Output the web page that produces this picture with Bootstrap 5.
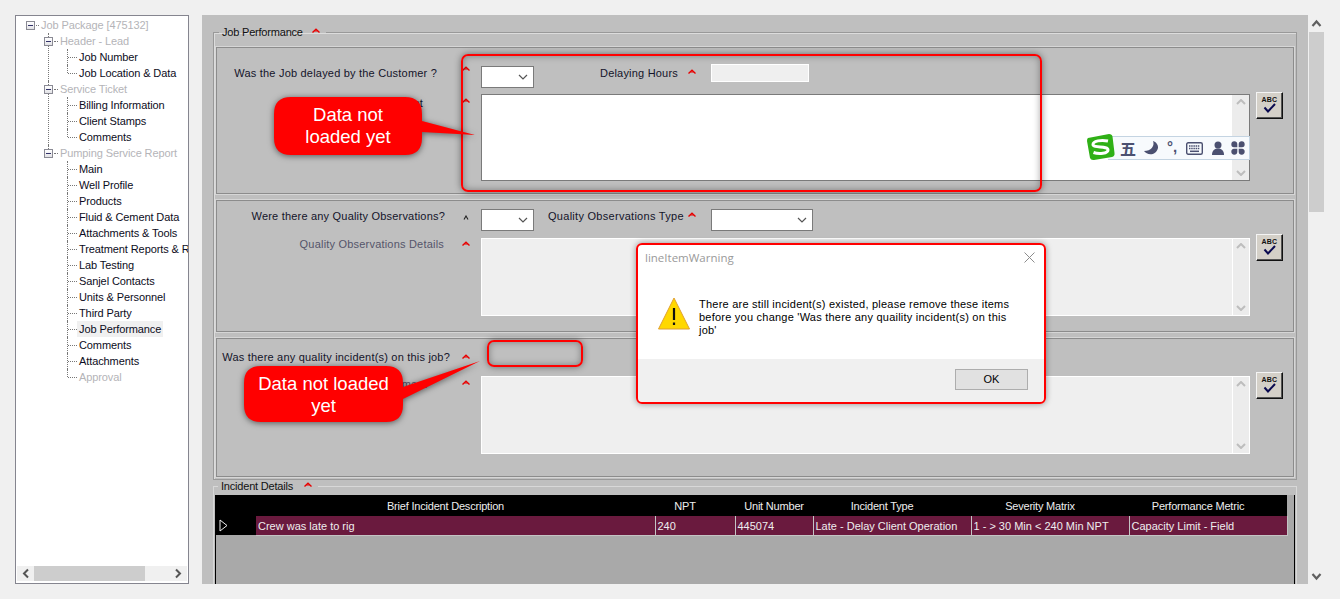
<!DOCTYPE html>
<html lang="en">
<head>
    <meta charset="UTF-8">
    <meta name="viewport" content="width=device-width, initial-scale=1.0">
    <title>Job Performance</title>
    <link href="https://cdn.jsdelivr.net/npm/bootstrap@5.3.0/dist/css/bootstrap.min.css" rel="stylesheet">
    <style>
        html, body { height: 100%; overflow: hidden; }
        body {
            background: #f0f0f0;
            color: #14142a;
            font-family: "Liberation Sans", Arial, sans-serif;
            font-size: 11px;
            line-height: 14px;
        }
        .stage { position: relative; width: 1340px; height: 599px; overflow: hidden; padding: 15px 0 0 15px; }
        .shell { height: 569px; }

        /* tree */
        .tree-box { width: 174px; height: 569px; background: #fff; border: 1px solid #85858f; position: relative; overflow: hidden; }
        .tree-box ul { list-style: none; margin: 0; padding: 0; }
        .tree-box .tree-root { padding: 1px 0 0 10px; }
        .tree-row { display: flex; align-items: center; height: 16px; white-space: nowrap; color: #0c0c22; letter-spacing: -.1px; }
        .tree-row.tree-off { color: #b4b4b8; }
        .exp-box { width: 9px; height: 9px; border: 1px solid #8a8a94; background: linear-gradient(#fff, #e2e2e6); position: relative; flex: none; z-index: 1; }
        .exp-box::after { content: ""; position: absolute; left: 1px; right: 1px; top: 3px; height: 1px; background: #33336a; }
        .dots { border-top: 1px dotted #777; flex: none; }
        .dots-root { width: 3px; margin: 0 2px 0 1px; }
        .dots-a { width: 4px; margin: 0 2px 0 1px; }
        .dots-b { width: 9px; margin: 0 2px 0 1px; }
        .tree-box .tree-l1 { margin-left: 22px; }
        .tree-l1 > li { position: relative; }
        .tree-l1 > li > .tree-row { margin-left: -4px; }
        .tree-box .tree-l2 { margin-left: 19px; }
        .tree-l1 > li::before, .tree-l2 > li::before { content: ""; position: absolute; left: 0; top: 0; bottom: 0; border-left: 1px dotted #777; }
        .tree-l1 > li:last-child::before, .tree-l2 > li:last-child::before { bottom: auto; height: 8px; }
        .tree-l2 > li { position: relative; }
        .tree-sel span:last-child { background: #f0f0f0; padding: 1px 2px; margin-left: -2px; }
        .h-scroll { position: absolute; left: 1px; right: 1px; bottom: 2px; height: 15px; background: #f0f0f0; }
        .h-thumb { width: 111px; height: 15px; background: #cdcdcd; }

        /* main panel */
        .main-pane { width: 1106px; height: 569px; margin-left: 13px; background: #bfbfbf; padding: 10px 11px 0; overflow: hidden; flex: none; }
        .v-scroll { width: 15px; height: 569px; margin-left: 1px; flex: none; }
        .v-thumb { height: 180px; background: #cdcdcd; }
        .v-arrow { height: 15px; }
        .v-arrow-top { height: 17px; }
        .v-arrow svg { width: 11px; height: 9px; }
        .legacy-set { border: 1px solid #999; box-shadow: inset 1px 1px 0 #dcdcdc; padding: 0 2px 2px; margin: 0; min-width: 0; }
        .legacy-set legend { float: none; width: auto; margin: 0 0 0 3px; padding: 0 3px; font-size: 11px; line-height: 14px; letter-spacing: -.2px; color: #111; }
        .legacy-set legend svg { margin-left: 9px; margin-right: 3px; vertical-align: 3px; }
        .set-two { border-color: #d8d8d8; box-shadow: none; padding: 0 1px; height: 120px; margin-top: -1px; }
        .set-two legend { margin-left: 3px; }
        .set-two legend svg { margin-left: 11px; }
        .sub-panel { border: 1px solid #8c8c8c; box-shadow: 0 0 0 1px #d6d6d6; position: relative; }
        .panel-a { height: 147px; margin-top: 8px; padding-top: 18px; }
        .panel-b { height: 132px; margin-top: 6px; padding-top: 8px; }
        .panel-c { height: 139px; margin-top: 6px; padding-top: 11px; }
        .form-line { display: flex; align-items: flex-start; }
        .gap-a { margin-top: 6px; }
        .gap-b { margin-top: 7px; }
        .gap-c { margin-top: 12px; }
        .fld-label { width: 244px; flex: none; text-align: right; white-space: nowrap; letter-spacing: .2px; }
        .inline-label { white-space: nowrap; letter-spacing: .2px; }
        .label-wide { letter-spacing: .28px; }
        .pr-24 { padding-right: 24px; }
        .pr-38 { padding-right: 38px; }
        .pr-16 { padding-right: 16px; }
        .pr-17 { padding-right: 17px; }
        .pr-11 { padding-right: 11px; }
        .pr-34 { padding-right: 34px; }
        .down-9 { padding-top: 2px; }
        .down-1 { padding-top: 1px; }
        .lift-1 { margin-top: -1px; }
        .faded { color: #55556a; }
        .req { width: 8px; height: 5px; flex: none; display: block; }
        .req-slot { width: 20px; flex: none; padding-left: 1px; padding-top: 4px; }
        .slot-top { padding-top: 0; }
        .slot-black { padding-top: 6px; }
        .slot-mid { padding-top: 3px; }
        .req-inline { margin: 3px 15px 0 10px; }
        .req-near { margin-left: 4px; }
        .fake-select { width: 53px; height: 22px; background: #fff; border: 1px solid #7a7a7a; flex: none; padding-right: 5px; }
        .select-wide { width: 102px; }
        .fake-select svg { width: 10px; height: 6px; }
        .ml-66 { margin-left: 66px; }
        .ml-14 { margin-left: 14px; }
        .hrs-box { width: 98px; height: 18px; background: #efefef; border: 1px solid #fff; margin-top: -2px; flex: none; }
        .memo-box { width: 769px; height: 87px; background: #fff; border: 1px solid #7a7a7a; flex: none; margin-right: 6px; }
        .memo-off { height: 78px; background: #efefef; border-color: #fff; }
        .memo-track { width: 17px; background: #ececec; height: 100%; padding: 4px 0; }
        .memo-track svg { width: 10px; height: 6px; }
        .memo-off .memo-track { border-left: 1px solid #fff; }
        .abc-btn { width: 27px; height: 27px; margin-top: -2px; background: #d4d0c8; border: 1px solid; border-color: #f4f4f4 #111 #111 #f4f4f4; box-shadow: inset -1px -1px 0 #555; flex: none; position: relative; font-size: 7px; font-weight: 700; line-height: 8px; text-align: center; padding-top: 3px; color: #111; letter-spacing: .2px; }
        .abc-up { margin-top: -4px; }
        .abc-btn svg { position: absolute; left: 6px; top: 10px; width: 13px; height: 10px; }

        /* incident grid */
        .grid-wrap { background: #a9a9a9; border-left: 1px solid #000; border-right: 1px solid #000; height: 100px; margin-top: 2px; padding-right: 7px; }
        .incident-grid { width: 1071px; table-layout: fixed; margin: 0; border-collapse: collapse; color: #eee; font-size: 11px; line-height: 14px; }
        .incident-grid th { background: #000; color: #eee; font-weight: 400; text-align: center; vertical-align: middle; height: 21px; padding: 0 20px 0 0; border: 0; white-space: nowrap; letter-spacing: -.2px; }
        .incident-grid td { background: #6a1a3e; color: #eee; vertical-align: middle; height: 19px; padding: 1px 2px 0; border: 0; border-right: 1px solid #c4c4c4; border-bottom: 1px solid #c4c4c4; white-space: nowrap; overflow: hidden; }
        .incident-grid th.no-pad { padding-right: 0; }
        .incident-grid td.row-head { background: #000; border: 0; padding: 0 0 0 3px; }
        .col-h { width: 40px; }
        .col-brief { width: 399px; }
        .col-npt { width: 80px; }
        .col-unit { width: 78px; }
        .col-wide { width: 158px; }

        /* overlays */
        .mark-box { position: absolute; border: 2px solid #f00; border-radius: 7px; box-shadow: 0 0 7px rgba(0,0,0,.45), inset 0 0 7px rgba(0,0,0,.35); pointer-events: none; }
        .mark-a { left: 461px; top: 54px; width: 581px; height: 138px; z-index: 3; }
        .mark-b { left: 636px; top: 243px; width: 410px; height: 161px; border-radius: 6px; z-index: 6; box-shadow: 0 0 6px rgba(0,0,0,.4); }
        .mark-c { left: 487px; top: 340px; width: 96px; height: 27px; z-index: 3; }
        .callout { position: absolute; z-index: 4; color: #fff; font-size: 18.5px; line-height: 21.5px; text-align: center; }
        .callout svg { position: absolute; left: 0; top: 0; overflow: visible; filter: drop-shadow(0 1px 3px rgba(0,0,0,.55)); }
        .callout span { position: relative; display: block; }
        .call-a { left: 274px; top: 97px; width: 148px; height: 58px; padding-top: 7px; }
        .call-b { left: 244px; top: 366px; width: 159px; height: 56px; padding-top: 7px; }

        .warn-dlg { position: absolute; left: 638px; top: 245px; width: 406px; height: 157px; z-index: 5; border: 0; border-radius: 0; background: #fff; }
        .dlg-title { height: 24px; padding: 6px 8px 0 7px; font-family: "Open Sans", sans-serif; font-size: 11.5px; line-height: 14px; color: #9a9a9a; }
        .dlg-close { width: 11px; height: 11px; margin: 1px 1px 0 0; }
        .dlg-body { height: 90px; padding: 28px 28px 0 20px; font-size: 11px; line-height: 13px; color: #000; letter-spacing: .23px; gap: 9px; }
        .dlg-body svg { width: 32px; height: 33px; flex: none; }
        .dlg-text { padding-top: 1px; }
        .dlg-foot { background: #f0f0f0; height: 43px; padding: 10px 16px 0 0; border: 0; border-radius: 0; text-align: right; }
        .dlg-ok { width: 73px; height: 21px; background: #e1e1e1; border: 1px solid #adadad; border-radius: 0; padding: 0; font-size: 11px; line-height: 19px; color: #000; }

        .ime-bar { position: absolute; left: 1086px; top: 133px; width: 164px; height: 28px; z-index: 5; }
        .ime-strip { position: absolute; left: 22px; right: 0; top: 3px; height: 24px; background: #f7fafd; border: 1px solid #c4d4e2; border-left: 0; padding-left: 12px; color: #4b5070; }
        .ime-logo { position: absolute; left: 0; top: 0; width: 29px; height: 28px; }
        .ime-wu { font-family: "Noto Sans CJK SC", sans-serif; font-size: 16px; line-height: 20px; width: 23px; font-weight: 700; flex: none; }
        .ime-moon { margin-right: 5px; }
        .ime-punc { width: 16px; flex: none; font-size: 15px; font-weight: 700; line-height: 16px; text-align: center; margin-top: -2px; }
        .ime-keys { margin-left: 6px; }
        .ime-user { margin-left: 8px; }
        .ime-more { margin-left: 6px; }
        .ime-strip svg { flex: none; }
    </style>
</head>
<body>
<svg width="0" height="0" class="position-absolute">
    <defs>
        <symbol id="caret" viewBox="0 0 8 5"><path d="M.5 4.500 L4 1.200 L7.500 4.500" fill="none" stroke="#e80000" stroke-width="1.400"/><path d="M2.500 3 H5.500" stroke="#e80000" stroke-width="1"/></symbol>
        <symbol id="chev-d" viewBox="0 0 10 6"><path d="M1 1 L5 5 L9 1" fill="none" stroke="#555" stroke-width="1.2"/></symbol>
        <symbol id="chev-soft-u" viewBox="0 0 10 6"><path d="M1 5 L5 1 L9 5" fill="none" stroke="#bdbdbd" stroke-width="2"/></symbol>
        <symbol id="chev-soft-d" viewBox="0 0 10 6"><path d="M1 1 L5 5 L9 1" fill="none" stroke="#bdbdbd" stroke-width="2"/></symbol>
        <symbol id="abc-check" viewBox="0 0 13 10"><path d="M1.500 4.500 L5 8.500 L12 1" fill="none" stroke="#0a0a50" stroke-width="2"/></symbol>
    </defs>
</svg>

<div class="stage">
    <div class="shell d-flex">
        <div class="tree-box">
            <ul class="tree-root">
                <li>
                    <div class="tree-row tree-off"><span class="exp-box"></span><span class="dots dots-root"></span><span>Job Package [475132]</span></div>
                    <ul class="tree-l1">
                        <li>
                            <div class="tree-row tree-off"><span class="exp-box"></span><span class="dots dots-a"></span><span>Header - Lead</span></div>
                            <ul class="tree-l2">
                                <li><div class="tree-row"><span class="dots dots-b"></span><span>Job Number</span></div></li>
                                <li><div class="tree-row"><span class="dots dots-b"></span><span>Job Location &amp; Data</span></div></li>
                            </ul>
                        </li>
                        <li>
                            <div class="tree-row tree-off"><span class="exp-box"></span><span class="dots dots-a"></span><span>Service Ticket</span></div>
                            <ul class="tree-l2">
                                <li><div class="tree-row"><span class="dots dots-b"></span><span>Billing Information</span></div></li>
                                <li><div class="tree-row"><span class="dots dots-b"></span><span>Client Stamps</span></div></li>
                                <li><div class="tree-row"><span class="dots dots-b"></span><span>Comments</span></div></li>
                            </ul>
                        </li>
                        <li>
                            <div class="tree-row tree-off"><span class="exp-box"></span><span class="dots dots-a"></span><span>Pumping Service Report</span></div>
                            <ul class="tree-l2">
                                <li><div class="tree-row"><span class="dots dots-b"></span><span>Main</span></div></li>
                                <li><div class="tree-row"><span class="dots dots-b"></span><span>Well Profile</span></div></li>
                                <li><div class="tree-row"><span class="dots dots-b"></span><span>Products</span></div></li>
                                <li><div class="tree-row"><span class="dots dots-b"></span><span>Fluid &amp; Cement Data</span></div></li>
                                <li><div class="tree-row"><span class="dots dots-b"></span><span>Attachments &amp; Tools</span></div></li>
                                <li><div class="tree-row"><span class="dots dots-b"></span><span>Treatment Reports &amp; Reco</span></div></li>
                                <li><div class="tree-row"><span class="dots dots-b"></span><span>Lab Testing</span></div></li>
                                <li><div class="tree-row"><span class="dots dots-b"></span><span>Sanjel Contacts</span></div></li>
                                <li><div class="tree-row"><span class="dots dots-b"></span><span>Units &amp; Personnel</span></div></li>
                                <li><div class="tree-row"><span class="dots dots-b"></span><span>Third Party</span></div></li>
                                <li><div class="tree-row tree-sel"><span class="dots dots-b"></span><span>Job Performance</span></div></li>
                                <li><div class="tree-row"><span class="dots dots-b"></span><span>Comments</span></div></li>
                                <li><div class="tree-row"><span class="dots dots-b"></span><span>Attachments</span></div></li>
                                <li><div class="tree-row tree-off"><span class="dots dots-b"></span><span>Approval</span></div></li>
                            </ul>
                        </li>
                    </ul>
                </li>
            </ul>
            <div class="h-scroll d-flex align-items-center justify-content-between">
                <svg width="17" height="15" viewBox="0 0 17 15"><path d="M11 3.5 L7 7.5 L11 11.5" fill="none" stroke="#555" stroke-width="2"/></svg>
                <div class="h-thumb"></div>
                <div class="flex-grow-1"></div>
                <svg width="17" height="15" viewBox="0 0 17 15"><path d="M6 3.5 L10 7.5 L6 11.5" fill="none" stroke="#555" stroke-width="2"/></svg>
            </div>
        </div>

        <div class="main-pane">
            <fieldset class="legacy-set">
                <legend>Job Performance<svg class="req d-inline" viewBox="0 0 8 5"><use href="#caret"/></svg></legend>
                <div class="sub-panel panel-a">
                    <div class="form-line">
                        <div class="fld-label pr-24">Was the Job delayed by the Customer ?</div>
                        <div class="req-slot slot-top"><svg class="req"><use href="#caret"/></svg></div>
                        <div class="fake-select d-flex align-items-center justify-content-end"><svg><use href="#chev-d"/></svg></div>
                        <div class="inline-label ml-66">Delaying Hours</div>
                        <svg class="req req-inline"><use href="#caret"/></svg>
                        <div class="hrs-box"></div>
                    </div>
                    <div class="form-line gap-a">
                        <div class="fld-label pr-38 down-9">Delay Reason Comment</div>
                        <div class="req-slot"><svg class="req"><use href="#caret"/></svg></div>
                        <div class="memo-box d-flex justify-content-end">
                            <div class="memo-track d-flex flex-column justify-content-between align-items-center"><svg><use href="#chev-soft-u"/></svg><svg><use href="#chev-soft-d"/></svg></div>
                        </div>
                        <div class="abc-btn">ABC<svg><use href="#abc-check"/></svg></div>
                    </div>
                </div>
                <div class="sub-panel panel-b">
                    <div class="form-line">
                        <div class="fld-label pr-16">Were there any Quality Observations?</div>
                        <div class="req-slot slot-black"><svg class="req" viewBox="0 0 8 5"><path d="M2 4.5 L4 1 L6 4.5" fill="none" stroke="#222" stroke-width="1.1"/></svg></div>
                        <div class="fake-select d-flex align-items-center justify-content-end"><svg><use href="#chev-d"/></svg></div>
                        <div class="inline-label label-wide ml-14">Quality Observations Type</div>
                        <svg class="req req-inline req-near"><use href="#caret"/></svg>
                        <div class="fake-select select-wide d-flex align-items-center justify-content-end"><svg><use href="#chev-d"/></svg></div>
                    </div>
                    <div class="form-line gap-b">
                        <div class="fld-label pr-17 lift-1 faded">Quality Observations Details</div>
                        <div class="req-slot slot-mid"><svg class="req"><use href="#caret"/></svg></div>
                        <div class="memo-box memo-off d-flex justify-content-end">
                            <div class="memo-track d-flex flex-column justify-content-between align-items-center"><svg><use href="#chev-soft-u"/></svg><svg><use href="#chev-soft-d"/></svg></div>
                        </div>
                        <div class="abc-btn abc-up">ABC<svg><use href="#abc-check"/></svg></div>
                    </div>
                </div>
                <div class="sub-panel panel-c">
                    <div class="form-line">
                        <div class="fld-label pr-11">Was there any quality incident(s) on this job?</div>
                        <div class="req-slot"><svg class="req"><use href="#caret"/></svg></div>
                    </div>
                    <div class="form-line gap-c">
                        <div class="fld-label pr-34 down-1 faded">Incident Comment</div>
                        <div class="req-slot"><svg class="req"><use href="#caret"/></svg></div>
                        <div class="memo-box memo-off d-flex justify-content-end">
                            <div class="memo-track d-flex flex-column justify-content-between align-items-center"><svg><use href="#chev-soft-u"/></svg><svg><use href="#chev-soft-d"/></svg></div>
                        </div>
                        <div class="abc-btn abc-up">ABC<svg><use href="#abc-check"/></svg></div>
                    </div>
                </div>
            </fieldset>

            <fieldset class="legacy-set set-two">
                <legend>Incident Details<svg class="req d-inline" viewBox="0 0 8 5"><use href="#caret"/></svg></legend>
                <div class="grid-wrap">
                    <table class="table incident-grid">
                        <colgroup>
                            <col class="col-h"><col class="col-brief"><col class="col-npt"><col class="col-unit"><col class="col-wide"><col class="col-wide"><col class="col-wide">
                        </colgroup>
                        <thead>
                            <tr>
                                <th></th>
                                <th>Brief Incident Description</th>
                                <th>NPT</th>
                                <th class="no-pad">Unit Number</th>
                                <th>Incident Type</th>
                                <th>Severity Matrix</th>
                                <th>Performance Metric</th>
                            </tr>
                        </thead>
                        <tbody>
                            <tr>
                                <td class="row-head"><svg width="9" height="13" viewBox="0 0 9 13" class="d-block"><path d="M1 1 L8 6.5 L1 12 Z" fill="none" stroke="#eee"/></svg></td>
                                <td>Crew was late to rig</td>
                                <td>240</td>
                                <td>445074</td>
                                <td>Late - Delay Client Operation</td>
                                <td>1 - &gt; 30 Min &lt; 240 Min NPT</td>
                                <td>Capacity Limit - Field</td>
                            </tr>
                        </tbody>
                    </table>
                </div>
            </fieldset>
        </div>

        <div class="v-scroll d-flex flex-column">
            <div class="v-arrow v-arrow-top d-flex align-items-center justify-content-center"><svg viewBox="0 0 11 9"><path d="M1.5 7 L5.5 2.5 L9.5 7" fill="none" stroke="#606060" stroke-width="2.2"/></svg></div>
            <div class="v-thumb"></div>
            <div class="flex-grow-1"></div>
            <div class="v-arrow d-flex align-items-center justify-content-center"><svg viewBox="0 0 11 9"><path d="M1.5 2 L5.5 6.5 L9.5 2" fill="none" stroke="#606060" stroke-width="2.2"/></svg></div>
        </div>
    </div>

    <div class="mark-box mark-a"></div>
    <div class="mark-box mark-c"></div>

    <div class="callout call-a">
        <svg width="148" height="58"><path d="M17 0 H131 Q148 0 148 17 V24 L201 38 L148 35 V41 Q148 58 131 58 H17 Q0 58 0 41 V17 Q0 0 17 0 Z" fill="#f00"/></svg>
        <span>Data not<br>loaded yet</span>
    </div>
    <div class="callout call-b">
        <svg width="159" height="56"><path d="M17 0 H142 Q159 0 159 17 V21 L236 -5 L159 33 V39 Q159 56 142 56 H17 Q0 56 0 39 V17 Q0 0 17 0 Z" fill="#f00"/></svg>
        <span>Data not loaded<br>yet</span>
    </div>

    <div class="ime-bar">
        <div class="ime-strip d-flex align-items-center">
            <span class="ime-wu">五</span>
            <svg width="16" height="16" viewBox="0 0 16 16" class="ime-moon"><path d="M10 1 C12 6 8 11 1 11 C4 15.500 13 16 15 8 C15.500 5 13 2 10 1 Z" fill="#4b5070"/></svg>
            <span class="ime-punc">°,</span>
            <svg width="17" height="13" viewBox="0 0 17 13" class="ime-keys"><rect x=".7" y=".7" width="15.600" height="11.600" rx="1.500" fill="none" stroke="#4b5070" stroke-width="1.400"/><path d="M3 4 H14 M3 6.500 H14" stroke="#4b5070" stroke-width="1.500" stroke-dasharray="1.500 .7"/><path d="M4 9.300 H13" stroke="#4b5070" stroke-width="1.500"/></svg>
            <svg width="14" height="15" viewBox="0 0 14 15" class="ime-user"><circle cx="7" cy="4" r="3.500" fill="#4b5070"/><path d="M1 14 C1 9 4 7.500 7 7.500 C10 7.500 13 9 13 14 Z" fill="#4b5070"/></svg>
            <svg width="14" height="14" viewBox="0 0 14 14" class="ime-more"><g fill="#4b5070"><path d="M6.300 6.300 H3 A3 3 0 1 1 6.300 3 Z"/><path d="M7.700 6.300 H11 A3 3 0 1 0 7.700 3 Z"/><path d="M6.300 7.700 H3 A3 3 0 1 0 6.300 11 Z"/><path d="M7.700 7.700 H11 A3 3 0 1 1 7.700 11 Z"/></g></svg>
        </div>
        <svg class="ime-logo" viewBox="0 0 29 28"><path d="M2 5 L23 1 Q26 1 26.500 3.500 L28.500 20 Q29 23 26 24 L8 27 Q5 27.500 4 25 L1 8 Q1 5.500 2 5 Z" fill="#2fb016"/><path d="M22 8 C15 6.500 7 8 7 11.500 C7 15.500 22 12.500 22 17 C22 20.500 13 21.500 7.500 19.500" fill="none" stroke="#fff" stroke-width="3"/></svg>
    </div>

    <div class="card warn-dlg">
        <div class="dlg-title d-flex justify-content-between">
            <span>lineItemWarning</span>
            <svg class="dlg-close" viewBox="0 0 11 11"><path d="M.5 .5 L10.500 10.500 M10.500 .5 L.5 10.500" stroke="#8c8c8c" stroke-width="1"/></svg>
        </div>
        <div class="dlg-body d-flex">
            <svg viewBox="0 0 32 33"><path d="M16 1 L31.500 32 H.5 Z" fill="#ffd800" stroke="#e0a030" stroke-width="1" stroke-linejoin="round"/><path d="M16 11 V23" stroke="#111" stroke-width="2.200"/><path d="M16 25.500 V28" stroke="#111" stroke-width="2.200"/></svg>
            <div class="dlg-text">There are still incident(s) existed, please remove these items before you change 'Was there any quaility incident(s) on this job'</div>
        </div>
        <div class="card-footer dlg-foot">
            <button type="button" class="btn dlg-ok">OK</button>
        </div>
    </div>
    <div class="mark-box mark-b"></div>
</div>

<script src="https://cdn.jsdelivr.net/npm/bootstrap@5.3.0/dist/js/bootstrap.bundle.min.js"></script>
</body>
</html>
